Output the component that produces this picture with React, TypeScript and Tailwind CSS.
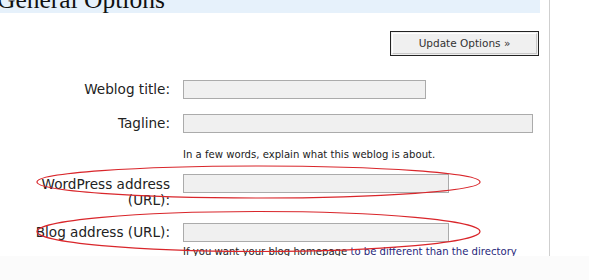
import React from "react";

const sans = { fontFamily: '"DejaVu Sans", Verdana, sans-serif' };

function Field({ w }: { w: number }) {
  return (
    <div
      className="h-[19px] border border-[#ababab] bg-[#f0f0f0] shrink-0"
      style={{ width: w }}
    />
  );
}

export default function App() {
  return (
    <div className="relative w-[589px] h-[280px] overflow-hidden bg-white text-[#222]" style={sans}>
      <div className="flex h-[256px]">
        <div className="w-[550px] h-[256px] border-r border-[#cfcfcf] overflow-hidden">
          <div className="w-[540px] h-[13px] bg-[#e6f1fb] overflow-hidden">
            <div
              className="-mt-[13px] -ml-[3px] text-[25.5px] leading-[26px] text-[#111] whitespace-nowrap"
              style={{ fontFamily: '"Liberation Serif", "Times New Roman", serif' }}
            >
              General Options
            </div>
          </div>

          <div className="flex justify-end pr-[10px] mt-[18px]">
            <div className="w-[149px] h-[25px] border border-[#222] bg-[#f0f0f0] p-px">
              <div className="w-full h-full border-t border-l border-white border-r border-b border-r-[#c8c8c8] border-b-[#c8c8c8] flex items-center justify-center text-[10.5px] text-[#333]">
                Update Options »
              </div>
            </div>
          </div>

          <div className="flex items-start mt-[24px]">
            <div className="w-[170px] text-right text-[13.6px] leading-[16px] mt-[1px]">Weblog title:</div>
            <div className="ml-[13px]"><Field w={243} /></div>
          </div>

          <div className="flex items-start mt-[15px]">
            <div className="w-[170px] text-right text-[13.6px] leading-[16px] mt-[1px]">Tagline:</div>
            <div className="ml-[13px]"><Field w={350} /></div>
          </div>

          <div className="ml-[183px] mt-[15px] text-[10.1px] leading-[13px] whitespace-nowrap">
            In a few words, explain what this weblog is about.
          </div>

          <div className="flex items-start mt-[13px]">
            <div className="w-[170px] text-right text-[13.6px] leading-[16px] mt-[2px] whitespace-nowrap">
              WordPress address
              <br />
              (URL):
            </div>
            <div className="ml-[13px]"><Field w={266} /></div>
          </div>

          <div className="flex items-start mt-[15px]">
            <div className="w-[170px] text-right text-[13.6px] leading-[16px] mt-[1px] whitespace-nowrap">Blog address (URL):</div>
            <div className="ml-[13px]"><Field w={266} /></div>
          </div>

          <div className="ml-[183px] mt-[3px] text-[10.1px] leading-[13px] whitespace-nowrap">
            <span className="text-[#222]">If you want your blog homepage </span>
            <span className="text-[#26267a]">to be different than the directory</span>
          </div>
        </div>
        <div className="flex-1" />
      </div>
      <div className="h-[24px] bg-[#fbfbfb]" />

      <svg
        className="absolute inset-0 pointer-events-none"
        width="589"
        height="280"
        viewBox="0 0 589 280"
      >
        <ellipse cx="258.5" cy="182" rx="221.5" ry="16" fill="none" stroke="#d9262b" strokeWidth="1.2" />
        <ellipse cx="258.5" cy="231.5" rx="221.5" ry="20" fill="none" stroke="#d9262b" strokeWidth="1.2" />
      </svg>
    </div>
  );
}
